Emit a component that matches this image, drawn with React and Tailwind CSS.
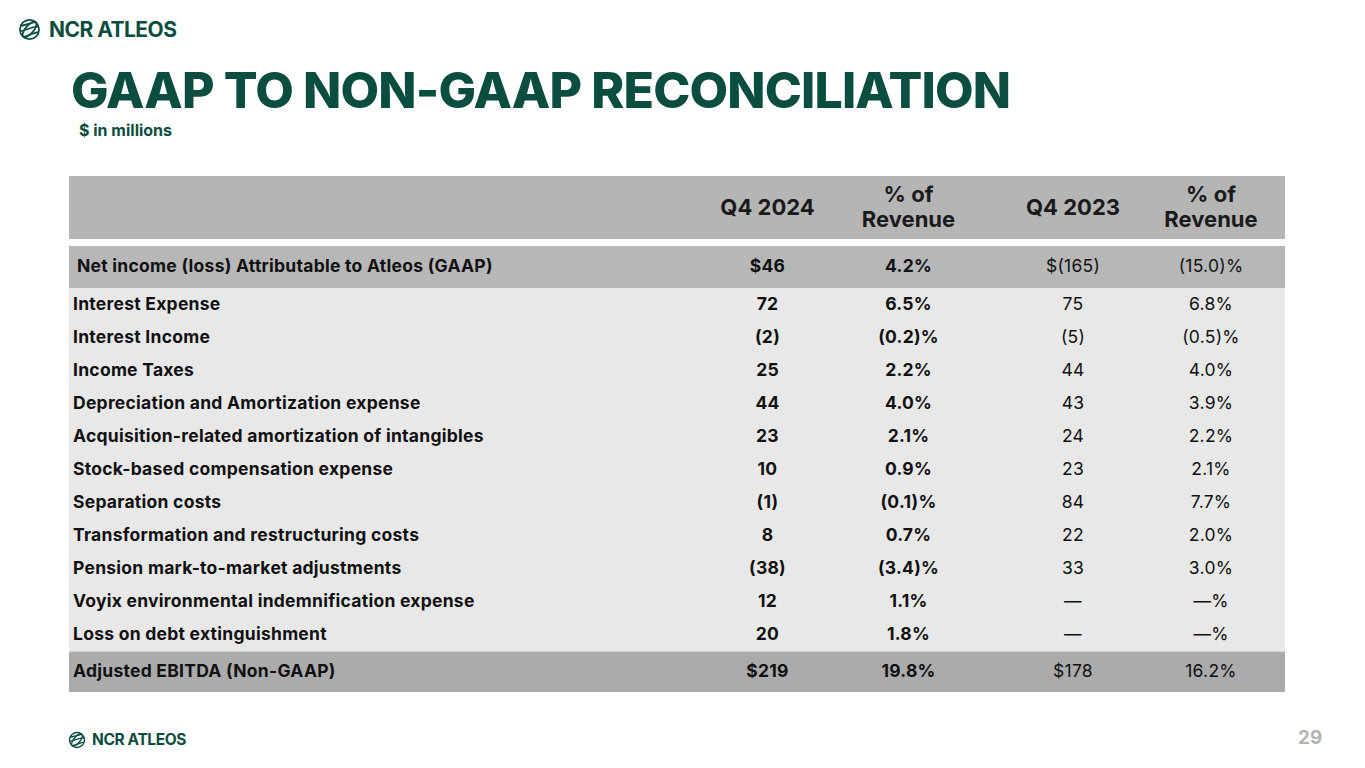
// GAAP to Non-GAAP reconciliation slide

const GREEN = 'text-[#0b4d3e]';

function Globe({ className = '' }) {
  return (
    <svg viewBox="0 0 24 24" className={className} fill="none" stroke="currentColor" strokeWidth="1.8">
      <circle cx="12" cy="12" r="10" />
      <ellipse cx="12" cy="12" rx="4.2" ry="10" transform="rotate(40 12 12)" />
      <path d="M3.2 8.2 C8 7.2 15 4.5 18.5 4.3" />
      <path d="M2.6 13.8 C9 12.6 16 8.4 21.4 9.2" />
      <path d="M5.3 19.6 C10 18.8 17 15.5 21 14.8" />
    </svg>
  );
}

function Logo({ small = false }) {
  return (
    <div className={`flex items-center ${small ? 'gap-[6px]' : 'gap-[8px]'} ${GREEN}`}>
      <Globe className={small ? 'w-[18px] h-[18px]' : 'w-[23px] h-[23px]'} />
      <span className={`font-bold tracking-tight ${small ? 'text-[15.5px]' : 'text-[21px]'}`}>NCR ATLEOS</span>
    </div>
  );
}

const rows = [
  ['Interest Expense', '72', '6.5%', '75', '6.8%'],
  ['Interest Income', '(2)', '(0.2)%', '(5)', '(0.5)%'],
  ['Income Taxes', '25', '2.2%', '44', '4.0%'],
  ['Depreciation and Amortization expense', '44', '4.0%', '43', '3.9%'],
  ['Acquisition-related amortization of intangibles', '23', '2.1%', '24', '2.2%'],
  ['Stock-based compensation expense', '10', '0.9%', '23', '2.1%'],
  ['Separation costs', '(1)', '(0.1)%', '84', '7.7%'],
  ['Transformation and restructuring costs', '8', '0.7%', '22', '2.0%'],
  ['Pension mark-to-market adjustments', '(38)', '(3.4)%', '33', '3.0%'],
  ['Voyix environmental indemnification expense', '12', '1.1%', '—', '—%'],
  ['Loss on debt extinguishment', '20', '1.8%', '—', '—%'],
];

const GRID = 'grid grid-cols-[631px_135px_147px_182px_94px] items-center';

function Row({ cells, className = '', labelClass = 'pl-[4px]' }) {
  const [label, a, b, c, d] = cells;
  return (
    <div className={`${GRID} ${className}`}>
      <div className={`font-bold ${labelClass}`}>{label}</div>
      <div className="text-center font-bold">{a}</div>
      <div className="text-center font-bold">{b}</div>
      <div className="text-center">{c}</div>
      <div className="text-center">{d}</div>
    </div>
  );
}

export default function App() {
  return (
    <div className="w-[1365px] h-[768px] bg-white relative overflow-hidden font-['Inter',sans-serif]">
      <div className="pl-[18px] pt-[14px]">
        <Logo />
      </div>

      <div className="pl-[71px] pt-[16px]">
        <h1 className={`text-[50px] leading-[56px] font-extrabold tracking-[-0.017em] ${GREEN}`}>
          GAAP TO NON-GAAP RECONCILIATION
        </h1>
        <div className={`pl-[8px] text-[16px] font-bold ${GREEN}`}>$ in millions</div>
      </div>

      <div className="ml-[69px] mt-[34px] w-[1216px] text-[#111] text-[17.5px] tracking-[0.015em]">
        <div className={`${GRID} h-[63px] bg-[#b5b5b5] text-[22px] leading-[25px] font-bold text-[#1a1a1a] tracking-normal`}>
          <div />
          <div className="text-center">Q4 2024</div>
          <div className="text-center">% of<br />Revenue</div>
          <div className="text-center">Q4 2023</div>
          <div className="text-center">% of<br />Revenue</div>
        </div>

        <Row
          cells={['Net income (loss) Attributable to Atleos (GAAP)', '$46', '4.2%', '$(165)', '(15.0)%']}
          className="mt-[7px] h-[42px] bg-[#b7b7b7]"
          labelClass="pl-[8px]"
        />

        <div className="bg-[#e8e8e8]">
          {rows.map((r) => (
            <Row key={r[0]} cells={r} className="h-[33px]" />
          ))}
        </div>

        <Row
          cells={['Adjusted EBITDA (Non-GAAP)', '$219', '19.8%', '$178', '16.2%']}
          className="h-[41px] bg-[#ababab] border-t border-[#d6d6d6]"
        />
      </div>

      <div className="absolute left-[68px] top-[728px]">
        <Logo small />
      </div>
      <div className="absolute left-[1298px] top-[724px] text-[19px] font-bold text-[#b3b3b3]">29</div>
    </div>
  );
}
